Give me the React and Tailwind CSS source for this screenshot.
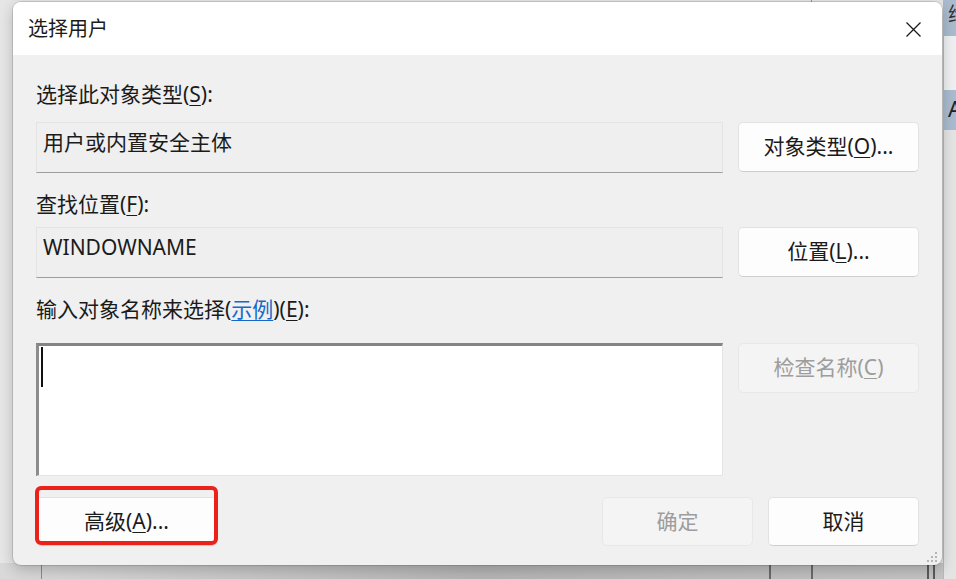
const ui = "font-['Noto_Sans','Noto_Sans_CJK_SC',sans-serif]";

function Key({ children }) {
  return <span className="underline underline-offset-[3px] decoration-1">{children}</span>;
}

function Button({ children, disabled, className = '' }) {
  return (
    <div
      className={
        'flex items-center justify-center rounded-[5px] border text-[21px] ' +
        (disabled
          ? 'bg-[#f4f4f4] border-[#e8e8e8] text-[#9d9d9d] '
          : 'bg-[#fdfdfd] border-[#e2e2e2] border-b-[#cdcdcd] text-[#1b1b1b] ') +
        className
      }
    >
      {children}
    </div>
  );
}

function Field({ children }) {
  return (
    <div className="flex-1 h-[51px] bg-[#efefef] border border-[#e3e3e3] border-b-[#9d9d9d] px-[6px] pt-[5px] text-[21px] leading-[28px] text-[#1b1b1b]">
      {children}
    </div>
  );
}

function Label({ children, className = '' }) {
  return <div className={'h-[28px] leading-[28px] text-[21px] text-[#1b1b1b] ' + className}>{children}</div>;
}

function Grip() {
  return (
    <svg width="10" height="10" viewBox="0 0 10 10" className="absolute right-[5px] bottom-[3px]">
      <g fill="#b5b5b5">
        <rect x="8" y="0" width="2" height="2" />
        <rect x="4" y="4" width="2" height="2" />
        <rect x="8" y="4" width="2" height="2" />
        <rect x="0" y="8" width="2" height="2" />
        <rect x="4" y="8" width="2" height="2" />
        <rect x="8" y="8" width="2" height="2" />
      </g>
    </svg>
  );
}

export default function App() {
  return (
    <div className={'relative w-[956px] h-[579px] overflow-hidden bg-[#e6e6e6] ' + ui}>
      {/* windows behind the dialog */}
      <div className="absolute left-0 right-0 bottom-0 h-[16px] bg-gradient-to-r from-[#d9d9d9] via-[#b4b4b4] to-[#c4c4c4]">
        <div className="absolute left-[41px] top-0 bottom-0 w-px bg-[#8a8a8a]" />
        <div className="absolute left-[769px] top-0 bottom-0 w-[2px] bg-[#6a6a6a]" />
        <div className="absolute left-[811px] top-0 bottom-0 w-[2px] bg-[#6a6a6a]" />
        <div className="absolute left-[927px] top-0 bottom-0 w-[2px] bg-[#5a5a5a]" />
        <div className="absolute left-[933px] top-0 bottom-0 w-[2px] bg-[#5a5a5a]" />
      </div>
      <div className="absolute left-[811px] top-0 h-[4px] w-px bg-[#9a9a9a]" />
      <div className="absolute right-0 top-0 w-[13px] bottom-0 flex flex-col bg-[#e4e4e4] border-l border-[#b8b8b8]">
        <div className="h-[36px] bg-[#a9bbce] overflow-hidden pl-[4px] pt-[2px] text-[20px] leading-[26px] text-[#333]">维</div>
        <div className="h-[54px] bg-[#eef0f2]" />
        <div className="h-[40px] bg-[#a9bbce] overflow-hidden pl-[4px] pt-[4px] text-[22px] leading-[28px] text-[#222]">A</div>
      </div>

      {/* dialog */}
      <div className="relative ml-[13px] mt-[2px] w-[929px] h-[563px] rounded-[8px] bg-[#f0f0f0] shadow-[0_0_0_1px_rgba(0,0,0,0.12),0_4px_14px_rgba(0,0,0,0.22)] flex flex-col">
        <div className="h-[53px] shrink-0 bg-white rounded-t-[8px] flex items-center pl-[15px] pr-[21px]">
          <div className="flex-1 text-[20px] text-[#1b1b1b]">选择用户</div>
          <svg width="15" height="15" viewBox="0 0 15 15" className="mt-[1px]">
            <path d="M0.5 0.5 L14.5 14.5 M14.5 0.5 L0.5 14.5" stroke="#1b1b1b" strokeWidth="1.3" fill="none" />
          </svg>
        </div>

        <div className="flex flex-col px-[23px] pt-[25px] pb-[19px]">
          <Label>
            选择此对象类型(<Key>S</Key>):
          </Label>
          <div className="mt-[14px] flex gap-[15px]">
            <Field>用户或内置安全主体</Field>
            <Button className="w-[181px] h-[50px]">
              对象类型(<Key>O</Key>)...
            </Button>
          </div>

          <Label className="mt-[17px]">
            查找位置(<Key>F</Key>):
          </Label>
          <div className="mt-[9px] flex gap-[15px]">
            <Field>WINDOWNAME</Field>
            <Button className="w-[181px] h-[50px]">
              位置(<Key>L</Key>)...
            </Button>
          </div>

          <Label className="mt-[17px]">
            输入对象名称来选择(<span className="text-[#1668c9] underline underline-offset-[3px] decoration-1">示例</span>)(<Key>E</Key>):
          </Label>
          <div className="mt-[20px] flex gap-[15px] items-start">
            <div className="flex-1 h-[133px] bg-white border-t-[3px] border-l-[3px] border-t-[#848484] border-l-[#8c8c8c] border-r border-b border-r-[#e4e4e4] border-b-[#e4e4e4]">
              <div className="ml-[2px] mt-[1px] w-[2px] h-[40px] bg-[#111]" />
            </div>
            <Button disabled className="w-[181px] h-[50px]">
              检查名称(<Key>C</Key>)
            </Button>
          </div>

          <div className="mt-[21px] flex gap-[15px]">
            <div className="relative w-[181px]">
              <Button className="h-[49px]">
                高级(<Key>A</Key>)...
              </Button>
              <div className="absolute -left-[1px] -right-[1px] -top-[11px] bottom-[1px] rounded-[6px] border-[4px] border-[#ea2219]" />
            </div>
            <div className="flex-1" />
            <Button disabled className="w-[151px] h-[49px]">
              确定
            </Button>
            <Button className="w-[151px] h-[49px]">取消</Button>
          </div>
        </div>
        <Grip />
      </div>
    </div>
  );
}
